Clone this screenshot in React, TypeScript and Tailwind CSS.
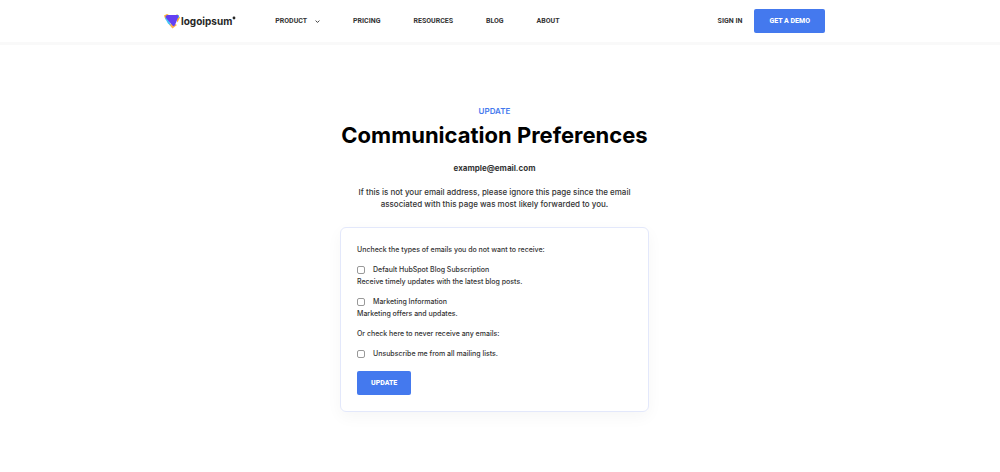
import type { ReactNode } from "react";

const navLinks = ["Pricing", "Resources", "Blog", "About"];

function Logo() {
  return (
    <a href="#" aria-label="logoipsum" className="flex items-center gap-px text-[#262626] normal-case">
      <svg viewBox="0 0 32 32" className="size-4" aria-hidden="true">
        <path d="M6 2 0 5 3 13 12 5Z" fill="#ffb52e" />
        <path d="M26 2 32 9 27 19 23 8Z" fill="#ffb52e" />
        <path d="M25 3 30 5 30 10 25 9Z" fill="#45c7f5" />
        <path d="M10 23 17 31 26 24 17 19Z" fill="#ffb04a" />
        <path d="M1 9 8 21l6 5-5-15Z" fill="#45c7f5" />
        <path d="M7 4h20q3 0 2 3l-7 17q-2 4-5 1L4 10q-3-5 3-6Z" fill="#6340f2" />
      </svg>
      <span className="flex items-start text-[10px] leading-4 font-bold">
        logoipsum
        <svg viewBox="0 0 4 8" className="h-2 w-1" aria-hidden="true">
          <circle cx="2" cy="5" r="1.4" fill="currentColor" />
        </svg>
      </span>
    </a>
  );
}

function Option({ id, label, children }: { id: string; label: string; children?: ReactNode }) {
  return (
    <div>
      <div className="flex items-center gap-2">
        <input
          id={id}
          type="checkbox"
          className="size-2 appearance-none rounded-[2px] border border-[#999] bg-white checked:bg-[#4479ee]"
        />
        <label htmlFor={id} className="leading-3">{label}</label>
      </div>
      {children}
    </div>
  );
}

export default function App() {
  return (
    <div className="min-h-screen bg-white font-['Inter',sans-serif] text-[#333]">
      <header className="border-b-3 border-[#f9f9f9] pr-[11px]">
        <div className="mx-auto flex h-[42px] max-w-[661px] items-center text-[7px] uppercase">
          <Logo />
          <nav className="ml-[39px] flex items-center gap-[33px] font-['Roboto',sans-serif] font-bold">
            <button type="button" className="flex items-center gap-2 uppercase">
              Product
              <svg viewBox="0 0 8 8" className="size-[5px]" fill="none" stroke="currentColor" strokeWidth="1.5" aria-hidden="true">
                <path d="m1 2.5 3 3 3-3" />
              </svg>
            </button>
            {navLinks.map((name) => (
              <a key={name} href="#">{name}</a>
            ))}
          </nav>
          <a href="#" className="ml-auto font-['Roboto',sans-serif] font-bold">Sign in</a>
          <a href="#" className="ml-3 rounded-[2px] bg-[#4479ee] px-[15px] py-[7px] font-['Roboto',sans-serif] leading-[10px] font-extrabold text-white">
            Get a demo
          </a>
        </div>
      </header>

      <main className="pt-[60px] pr-[11px] pb-14">
        <div className="mx-auto flex max-w-[309px] flex-col items-center text-center">
          <p className="text-[8px] leading-3 font-semibold text-[#4479ee]">UPDATE</p>
          <h1 className="mt-1 text-[22px] leading-7 font-bold whitespace-nowrap text-black">Communication Preferences</h1>
          <p className="mt-[13px] text-[8px] leading-3 font-bold">example@email.com</p>
          <p className="mt-3 px-3 text-[8px] leading-3 font-medium text-[#333]">
            If this is not your email address, please ignore this page since the email associated with this page was most likely forwarded to you.
          </p>
          <form
            className="mt-[17px] flex w-full flex-col items-start gap-[9px] rounded-md border border-[#e3e8fb] p-4 text-left text-[7px] leading-[11px] font-medium shadow-[0_5px_16px_rgba(0,0,0,0.04)]"
            onSubmit={(event) => event.preventDefault()}
          >
            <p>Uncheck the types of emails you do not want to receive:</p>
            <Option id="blog" label="Default HubSpot Blog Subscription">
              <p>Receive timely updates with the latest blog posts.</p>
            </Option>
            <Option id="marketing" label="Marketing Information">
              <p>Marketing offers and updates.</p>
            </Option>
            <p>Or check here to never receive any emails:</p>
            <Option id="unsubscribe" label="Unsubscribe me from all mailing lists." />
            <button type="submit" className="mt-0.5 rounded-[2px] bg-[#4479ee] px-3.5 py-[7px] font-['Roboto',sans-serif] leading-[10px] font-extrabold text-white">
              UPDATE
            </button>
          </form>
        </div>
      </main>
    </div>
  );
}
